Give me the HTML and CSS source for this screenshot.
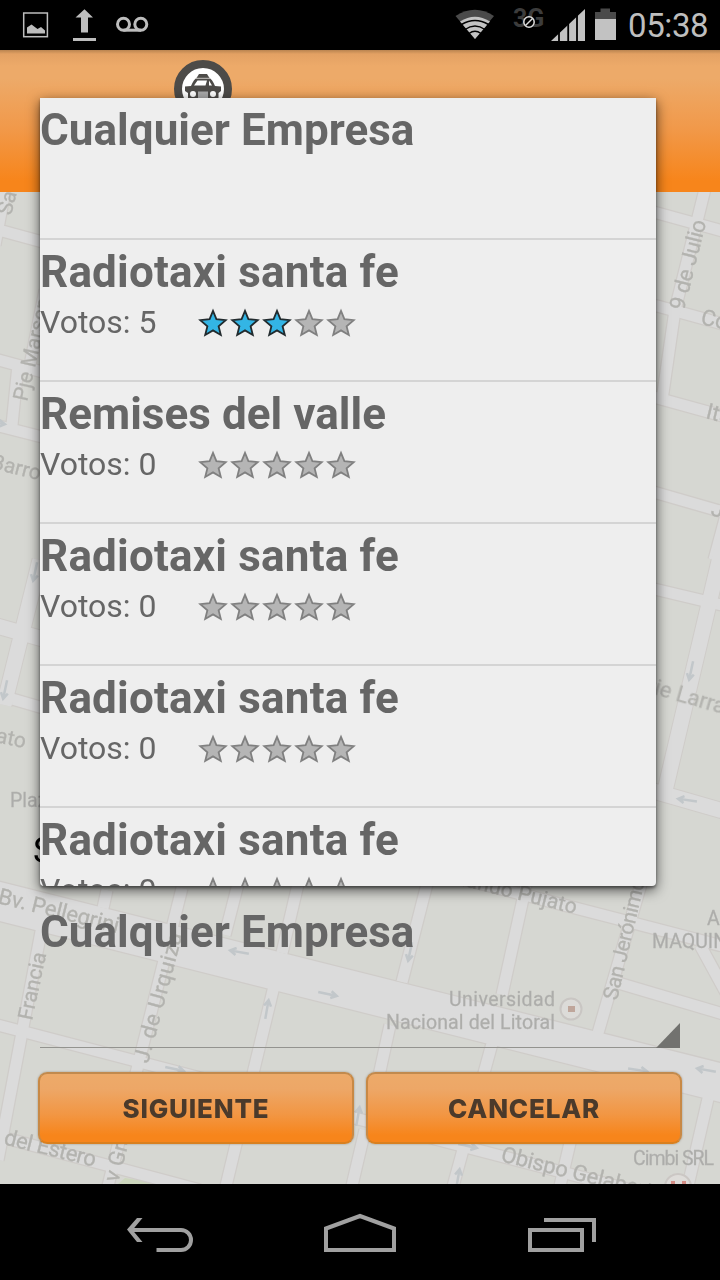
FILE: index.html
```html
<!DOCTYPE html>
<html lang="es">
<head>
<meta charset="utf-8">
<title>Empresas</title>
<link rel="stylesheet" href="styles.css">
</head>
<body>
<svg class="defs" width="0" height="0" aria-hidden="true">
  <defs>
    <symbol id="star" viewBox="0 0 32 32"><path d="M16 3.800 L19.400 12.200 L28.700 13.100 L21.600 19.200 L23.800 28 L16 23.400 L8.200 28 L10.400 19.200 L3.300 13.100 L12.600 12.200 Z"/></symbol>
    <g id="arrow"><path d="M-10 0H8M3 -3.500L9 0L3 3.500"/></g>
  </defs>
</svg>
<div class="phone">
  <header class="status">
    <div class="notifications">
      <svg width="130" height="50" viewBox="0 0 130 50">
        <rect x="3.700" y="13" width="23.700" height="23.700" fill="none" stroke="#bdbdbd" stroke-width="1.500"/>
        <path d="M7 33.500V27.500L11.500 24.500L17.500 29L21 27L25 30.500V33.500Z" fill="#bdbdbd"/>
        <path d="M64.500 9.300L73 17.500H68V32.500H61V17.500H55.500ZM53 38H76V41H53Z" fill="#bdbdbd"/>
        <g fill="none" stroke="#bdbdbd" stroke-width="3"><circle cx="103.500" cy="24.200" r="6"/><circle cx="120.800" cy="24.200" r="6"/><path d="M103.500 30.200H121"/></g>
      </svg>
    </div>
    <div class="system">
      <svg width="175" height="50" viewBox="450 0 175 50">
        <path d="M475 39L455.500 16Q475 3.500 494 16Z" fill="#4a4a4a"/>
        <path d="M475 39L460 21.500Q475 12 490 21.500Z" fill="#c2c2c2"/>
        <g fill="none" stroke="#000" stroke-width="1.500"><path d="M461.500 24.500Q475 16.500 488.500 24.500M465 29.500Q475 22.500 485 29.500M469 33.500Q475 29 481 33.500"/></g>
        <text x="513" y="27" class="network">3G</text>
        <circle cx="529" cy="22" r="5.200" fill="#000" stroke="#dedede" stroke-width="1.500"/><path d="M525.500 25.500L532.500 18.500" stroke="#dedede" stroke-width="1.500"/>
        <path d="M551 41L585 9V41Z" fill="#c2c2c2"/><path d="M559 20V41M568.200 10V41M577 5V41" stroke="#000" stroke-width="1.800"/>
        <path d="M595 19V12H600.500V8.500H610V12H616V19Z" fill="#4a4a4a"/><path d="M595 19H616V40H595Z" fill="#c2c2c2"/>
      </svg>
      <span class="clock">05:38</span>
    </div>
  </header>
  <div class="brandbar">
    <svg width="60" height="60" viewBox="0 0 60 60">
      <circle cx="30" cy="30" r="25" fill="#fff" stroke="#4d4b48" stroke-width="8"/>
      <path d="M26 15H34L36.500 19Q39 20 42 27L48 27.500V32L45.500 34V46H15V34L12 32V27.500L18 27Q21 20 23.500 19Z" fill="#4d4b48"/>
      <path d="M21 26.500L24.500 21.500H34L32.500 26.500ZM36 21.500L39 26.500H36Z" fill="#fff"/><path d="M23 19.300H37" stroke="#c8c5c2"/>
      <circle cx="20" cy="35" r="3" fill="#fff"/><circle cx="40" cy="35" r="3" fill="#fff"/><path d="M25 32.500H35V39H25Z" fill="#aaa"/>
    </svg>
  </div>
  <main class="stage">
    <svg class="map" width="720" height="992" viewBox="0 192 720 992">
      <defs>
        <g id="roads">
          <path d="M-10 1023L650 1195M-10 1134L200 1190"/>
          <path d="M46 905L-2 1160M182 888L107 1190M275 982L225 1190M107 890L103 908M239 880L225 935M299 880L282 953M428 880L402 982M526 885L502 995M648 860L596 1040M390 1025L378 1080M493 1040L452 1190M573 1130L559 1190M710 1090L687 1190M365 1130L351 1190"/>
          <path d="M440 873L730 948M608 980L730 1016M700 945L730 1000"/>
          <path d="M-5 229L50 244M-5 359L50 374M-5 425L50 439M18 365L12 425M5 190L-5 245M45 290L30 365M-5 694L50 710"/>
          <path d="M650 211L730 233M650 304L730 326M650 396L730 418M650 491L730 514M650 588L730 607"/>
          <path d="M706 185L675 310L662 400M730 500L714 560"/>
        </g>
        <g id="avenues">
          <path d="M-10 624L50 641M40 560L4 705M724 540L664 795M650 790L730 813"/>
        </g>
      </defs>
      <rect y="192" width="720" height="992" fill="#d6d7d2"/>
      <g class="streets">
        <path d="M118 1184L125 1178L165 1184Z" fill="#ccd6bd"/>
        <g fill="none" stroke="#cfccc9">
          <use href="#roads" stroke-width="13.500"/>
          <use href="#avenues" stroke-width="17"/>
          <path d="M-10 899L730 1085" stroke-width="40.500"/>
        </g>
        <g fill="none" stroke="#dbdbdb">
          <use href="#roads" stroke-width="11"/>
          <use href="#avenues" stroke-width="15"/>
          <path d="M-10 899L730 1085" stroke-width="38"/>
        </g>
        <g class="arrows">
          <use href="#arrow" transform="translate(239 952) rotate(190)"/>
          <use href="#arrow" transform="translate(328 994) rotate(12)"/>
          <use href="#arrow" transform="translate(267 1009) rotate(-80)"/>
          <use href="#arrow" transform="translate(175 1069) rotate(12)"/>
          <use href="#arrow" transform="translate(410 952) rotate(102)"/>
          <use href="#arrow" transform="translate(638 1070) rotate(8)"/>
          <use href="#arrow" transform="translate(706 1070) rotate(190)"/>
          <use href="#arrow" transform="translate(458 1178) rotate(-80)"/>
          <use href="#arrow" transform="translate(468 1146) rotate(12)"/>
          <use href="#arrow" transform="translate(358 1116) rotate(-80)"/>
          <use href="#arrow" transform="translate(691 671) rotate(102)"/>
          <use href="#arrow" transform="translate(687 800) rotate(188)"/>
          <use href="#arrow" transform="translate(5 690) rotate(102)"/>
          <use href="#arrow" transform="translate(35 572) rotate(102)"/>
          <use href="#arrow" transform="translate(-4 423) rotate(8)"/>
        </g>
        <g class="labels">
          <text transform="translate(11 216) rotate(-76)">San Luis</text>
          <text transform="translate(27 402) rotate(-77)">Pje Marsengo</text>
          <text transform="translate(-10 468) rotate(14)">Barro</text>
          <text transform="translate(-5 742) rotate(12)">ato</text>
          <text x="10" y="807" class="place">Plaza</text>
          <text transform="translate(-3 903) rotate(14)" class="large" textLength="124">Bv. Pellegrini</text>
          <text transform="translate(32 1021) rotate(-78)">Francia</text>
          <text transform="translate(148 1064) rotate(-75)" class="large" textLength="134">J. de Urquiza</text>
          <text transform="translate(3 1144) rotate(14)" class="large" textLength="94">del Estero</text>
          <text transform="translate(118 1183) rotate(-75)" class="large">v Gral</text>
          <text transform="translate(447 882) rotate(14)" textLength="132">rnando Pujato</text>
          <text transform="translate(617 1001) rotate(-77)" textLength="124">San Jerónimo</text>
          <text x="707" y="925" class="place">A.</text>
          <text x="652" y="948" class="place">MAQUINAS</text>
          <text x="555" y="1006" text-anchor="end" textLength="106" class="place">Universidad</text>
          <text x="555" y="1029" text-anchor="end" textLength="169" class="place">Nacional del Litoral</text>
          <text transform="translate(500 1161) rotate(14)" class="large" textLength="155">Obispo Gelabert</text>
          <text x="633" y="1165" textLength="81" class="place">Cimbi SRL</text>
          <text transform="translate(684 311) rotate(-76)" class="large" textLength="92">9 de Julio</text>
          <text transform="translate(700 324) rotate(12)" class="large">Córdoba</text>
          <text transform="translate(705 418) rotate(14)" class="large">Ituzaingó</text>
          <text transform="translate(710 515) rotate(14)" class="large">Junín</text>
          <text transform="translate(646 692) rotate(16)" class="large">rie Larramendi</text>
        </g>
        <circle cx="571" cy="1009" r="10.500" fill="#dcdbd8" stroke="#c9c6c3" stroke-width="2"/><path d="M568 1006H575V1012H568Z" fill="#bfa69b"/>
        <circle cx="678" cy="1187" r="13" fill="#dedcd9" stroke="#cbc7c4" stroke-width="2"/><path d="M673 1181V1186M684 1181V1186" stroke="#d58e86" stroke-width="4"/>
      </g>
    </svg>
    <div class="form">
      <p class="caption">S</p>
      <div class="spinner">Cualquier Empresa<i class="corner"></i></div>
      <div class="actions">
        <button class="action next"><span>SIGUIENTE</span></button>
        <button class="action cancel"><span>CANCELAR</span></button>
      </div>
    </div>
  </main>
  <nav class="navbar">
    <svg width="720" height="96" viewBox="0 1184 720 96" fill="none" stroke="#a0a0a0" stroke-width="4">
      <path d="M130 1230H181A10 10 0 0 1 181 1250H156.500"/><path d="M127 1229.500L137 1218H142.500L132.500 1230L142.500 1242H137Z" fill="#a0a0a0" stroke="none"/>
      <path d="M326 1250V1228.500L360 1216L394 1228.500V1250Z"/>
      <path d="M530 1230H582V1250H530ZM544 1220H594V1242"/>
    </svg>
  </nav>
  <ul class="dropdown">
    <li class="option"><b>Cualquier Empresa</b></li>
    <li class="option"><b class="radiotaxi">Radiotaxi santa fe</b><div class="votes"><span>Votos: 5</span><div class="stars"><svg class="on"><use href="#star"/></svg><svg class="on"><use href="#star"/></svg><svg class="on"><use href="#star"/></svg><svg><use href="#star"/></svg><svg><use href="#star"/></svg></div></div></li>
    <li class="option"><b>Remises del valle</b><div class="votes"><span>Votos: 0</span><div class="stars"><svg><use href="#star"/></svg><svg><use href="#star"/></svg><svg><use href="#star"/></svg><svg><use href="#star"/></svg><svg><use href="#star"/></svg></div></div></li>
    <li class="option"><b class="radiotaxi">Radiotaxi santa fe</b><div class="votes"><span>Votos: 0</span><div class="stars"><svg><use href="#star"/></svg><svg><use href="#star"/></svg><svg><use href="#star"/></svg><svg><use href="#star"/></svg><svg><use href="#star"/></svg></div></div></li>
    <li class="option"><b class="radiotaxi">Radiotaxi santa fe</b><div class="votes"><span>Votos: 0</span><div class="stars"><svg><use href="#star"/></svg><svg><use href="#star"/></svg><svg><use href="#star"/></svg><svg><use href="#star"/></svg><svg><use href="#star"/></svg></div></div></li>
    <li class="option"><b class="radiotaxi">Radiotaxi santa fe</b><div class="votes"><span>Votos: 0</span><div class="stars"><svg><use href="#star"/></svg><svg><use href="#star"/></svg><svg><use href="#star"/></svg><svg><use href="#star"/></svg><svg><use href="#star"/></svg></div></div></li>
  </ul>
</div>
</body>
</html>
```

FILE: styles.css
```css
* { box-sizing: border-box; }
body { margin: 0; background: #000; font-family: Roboto, "Liberation Sans", sans-serif; }
svg { display: block; }
.defs { position: absolute; }
.phone { position: relative; width: 720px; height: 1280px; overflow: hidden; display: flex; flex-direction: column; }
.status { height: 50px; background: #000; display: flex; justify-content: space-between; padding: 0 12px 0 20px; }
.system { display: flex; align-items: center; gap: 3px; }
.network { font: bold 25px Roboto, sans-serif; fill: #3c3c3c; }
.clock { width: 80px; padding-top: 2px; font-size: 33px; line-height: 52px; letter-spacing: -.4px; color: #bebebe; white-space: nowrap; }
.brandbar {
  height: 142px;
  padding: 9px 0 0 173px;
  background: linear-gradient(#b98450 0, rgba(220, 155, 95, .6) 4px, rgba(236, 170, 104, 0) 16px), linear-gradient(#edaa69 0, #edaa69 20%, #f1994a 55%, #f7851b 92%, #f7851b 100%);
}
.stage { position: relative; height: 992px; overflow: hidden; }
.map { position: absolute; inset: 0; }
.streets { filter: blur(.7px); }
.labels { font: 21px Roboto, sans-serif; fill: #b3b3af; stroke: #b3b3af; stroke-width: .3; }
.labels .large { font-size: 22px; }
.labels .place { font-size: 19.500px; fill: #acacaa; }
.arrows { fill: none; stroke: #c2c7ca; stroke-width: 2.500; }
.form { position: relative; height: 100%; display: flex; flex-direction: column; padding: 638px 38px 40px; }
.caption { margin: 0; margin-left: -5px; height: 72px; font-size: 36px; line-height: 42px; color: #000; }
.spinner { position: relative; height: 146px; margin: 0 2px; padding-top: 2px; border-bottom: 1px solid #93938f; font-size: 44px; line-height: 56px; font-weight: bold; letter-spacing: .04px; color: #666; white-space: nowrap; }
.corner { position: absolute; right: 0; bottom: -1px; width: 24px; height: 25px; background: #72726f; clip-path: polygon(100% 0, 100% 100%, 0 100%); }
.actions { display: flex; gap: 12px; margin-top: 24px; }
.action {
  flex: 1; height: 72px; padding: 0;
  border: 2px solid #c88945; border-top-color: #c18a4e; border-bottom-color: #d9801f; border-radius: 9px;
  background: linear-gradient(#edaa69 0, #eda767 22%, #f29643 60%, #f7851b 90%);
  color: #4b3a2b; font: 800 26px Inter, sans-serif;
  box-shadow: 0 0 2px rgba(90, 70, 40, .5);
}
.action span { display: inline-block; letter-spacing: .8px; filter: blur(.4px); }
.navbar { height: 96px; background: #000; }
.dropdown {
  position: absolute; left: 40px; top: 98px; width: 616px; height: 788px; margin: 0; padding: 0; overflow: hidden; list-style: none;
  background: #eee; color: #666; border-radius: 0 0 4px 4px;
  box-shadow: 0 4px 13px rgba(0, 0, 0, .65), 0 2px 3px rgba(0, 0, 0, .4);
}
.option { height: 142px; border-bottom: 2px solid #d4d4d4; padding-top: 4px; }
.option b { display: block; font-size: 44px; line-height: 56px; letter-spacing: .04px; white-space: nowrap; }
.option .radiotaxi { letter-spacing: .19px; }
.votes { display: flex; font-size: 32px; line-height: 44px; }
.votes span { width: 157px; white-space: nowrap; }
.stars { display: flex; padding-top: 7px; }
.stars svg { width: 32px; height: 32px; fill: #b5b5b5; stroke: #808080; stroke-width: 1.800; }
.stars .on { fill: #33b5e5; stroke: #222b2e; }
```
